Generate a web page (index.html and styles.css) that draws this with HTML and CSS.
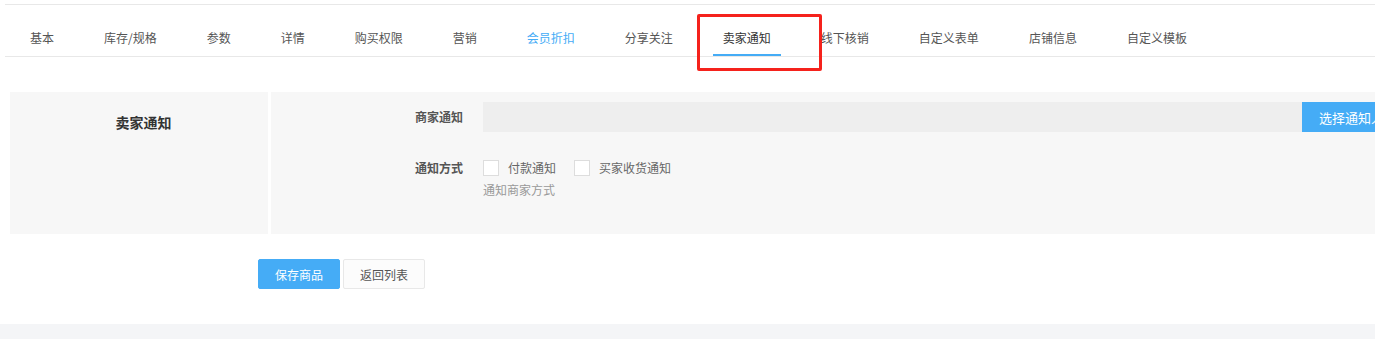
FILE: index.html
```html
<!DOCTYPE html>
<html lang="zh-CN">
  <head>
    <meta charset="UTF-8" />
    <meta name="viewport" content="width=device-width, initial-scale=1.0" />
    <title>编辑商品</title>
    <link rel="stylesheet" href="styles.css">
  </head>
  <body>
    <div class="page">
      <ul class="tabs">
        <li class="tab">基本</li>
        <li class="tab">库存/规格</li>
        <li class="tab">参数</li>
        <li class="tab">详情</li>
        <li class="tab">购买权限</li>
        <li class="tab">营销</li>
        <li class="tab tab-hover">会员折扣</li>
        <li class="tab">分享关注</li>
        <li class="tab active">卖家通知</li>
        <li class="tab">线下核销</li>
        <li class="tab">自定义表单</li>
        <li class="tab">店铺信息</li>
        <li class="tab">自定义模板</li>
      </ul>
      <div class="mark"></div>

      <div class="panel">
        <div class="panel-title">卖家通知</div>
        <div class="panel-body">
          <div class="form-row">
            <label class="form-label">商家通知</label>
            <div class="input-group">
              <input type="text" class="form-input" readonly />
              <button type="button" class="btn btn-primary btn-pick">选择通知人</button>
            </div>
          </div>
          <div class="form-row form-row-check">
            <label class="form-label">通知方式</label>
            <div class="form-field">
              <div class="checks">
                <label class="check"><span class="check-box"></span>付款通知</label>
                <label class="check"><span class="check-box"></span>买家收货通知</label>
              </div>
              <div class="help">通知商家方式</div>
            </div>
          </div>
        </div>
      </div>

      <div class="actions">
        <button type="button" class="btn btn-primary">保存商品</button>
        <button type="button" class="btn btn-default">返回列表</button>
      </div>
    </div>
    <div class="footer"></div>
  </body>
</html>
```

FILE: styles.css
```css
body {
  font-family: "Noto Sans CJK SC", "Liberation Sans", sans-serif;
  font-size: 12px;
  color: #555;
  margin: 0;
  background-color: #fff;
  overflow: hidden;
}

.page {
  position: relative;
  padding: 4px 0 0 5px;
  height: 320px;
}

.tabs {
  display: flex;
  margin: 0;
  padding: 0;
  list-style: none;
  border-top: 1px solid #e8e8e8;
  border-bottom: 1px solid #e8e8e8;
}

.tab {
  margin: 0 15px;
  padding: 23px 10px 6px;
  line-height: 20px;
  color: #555;
  white-space: nowrap;
  border-bottom: 2px solid transparent;
}

.tab-hover {
  color: #45acf6;
}

.tab.active {
  color: #333;
  border-bottom-color: #45acf6;
}

/* red annotation box around the active tab */
.mark {
  position: absolute;
  left: 697px;
  top: 14px;
  width: 119px;
  height: 51px;
  border: 3px solid #f5221c;
  border-radius: 2px;
}

.panel {
  display: flex;
  gap: 3px;
  margin: 35px 0 0 5px;
  height: 142px;
}

.panel-title {
  flex-shrink: 0;
  width: 249px;
  padding: 20px 0 0 9px;
  background-color: #f7f7f7;
  font-size: 14px;
  font-weight: bold;
  line-height: 20px;
  color: #333;
  text-align: center;
}

.panel-body {
  flex: 1;
  min-width: 0;
  padding-top: 10px;
  background-color: #f7f7f7;
  overflow: hidden;
}

.form-row {
  display: flex;
  align-items: center;
  height: 30px;
}

.form-row-check {
  align-items: flex-start;
  height: auto;
  margin-top: 26px;
}

.form-label {
  flex-shrink: 0;
  width: 192px;
  margin-right: 20px;
  font-weight: bold;
  line-height: 20px;
  text-align: right;
  color: #555;
}

.input-group {
  display: flex;
  flex-shrink: 0;
}

.form-input {
  flex-shrink: 0;
  width: 819px;
  height: 30px;
  padding: 0 10px;
  box-sizing: border-box;
  border: none;
  background-color: #eee;
}

.checks {
  display: flex;
  gap: 18px;
  line-height: 20px;
}

.check {
  display: flex;
  align-items: center;
  color: #666;
}

.check-box {
  width: 14px;
  height: 14px;
  margin-right: 9px;
  border: 1px solid #ddd;
  background-color: #fff;
}

.help {
  margin-top: 2px;
  line-height: 20px;
  color: #999;
}

.btn {
  height: 30px;
  padding: 0 16px;
  font-family: inherit;
  font-size: 12px;
  border-radius: 2px;
  cursor: pointer;
}

.btn-primary {
  background-color: #45acf6;
  border: 1px solid #45acf6;
  color: #fff;
}

.btn-pick {
  flex-shrink: 0;
  width: 100px;
  padding-left: 16px;
  border-radius: 0;
  font-size: 13px;
  text-align: left;
  white-space: nowrap;
}

.btn-default {
  background-color: #fcfcfc;
  border: 1px solid #e8e8e8;
  color: #555;
}

.actions {
  display: flex;
  gap: 3px;
  margin: 25px 0 0 253px;
}

.actions .btn {
  width: 82px;
  padding: 0;
}

.footer {
  height: 20px;
  background-color: #f4f5f7;
}
```
